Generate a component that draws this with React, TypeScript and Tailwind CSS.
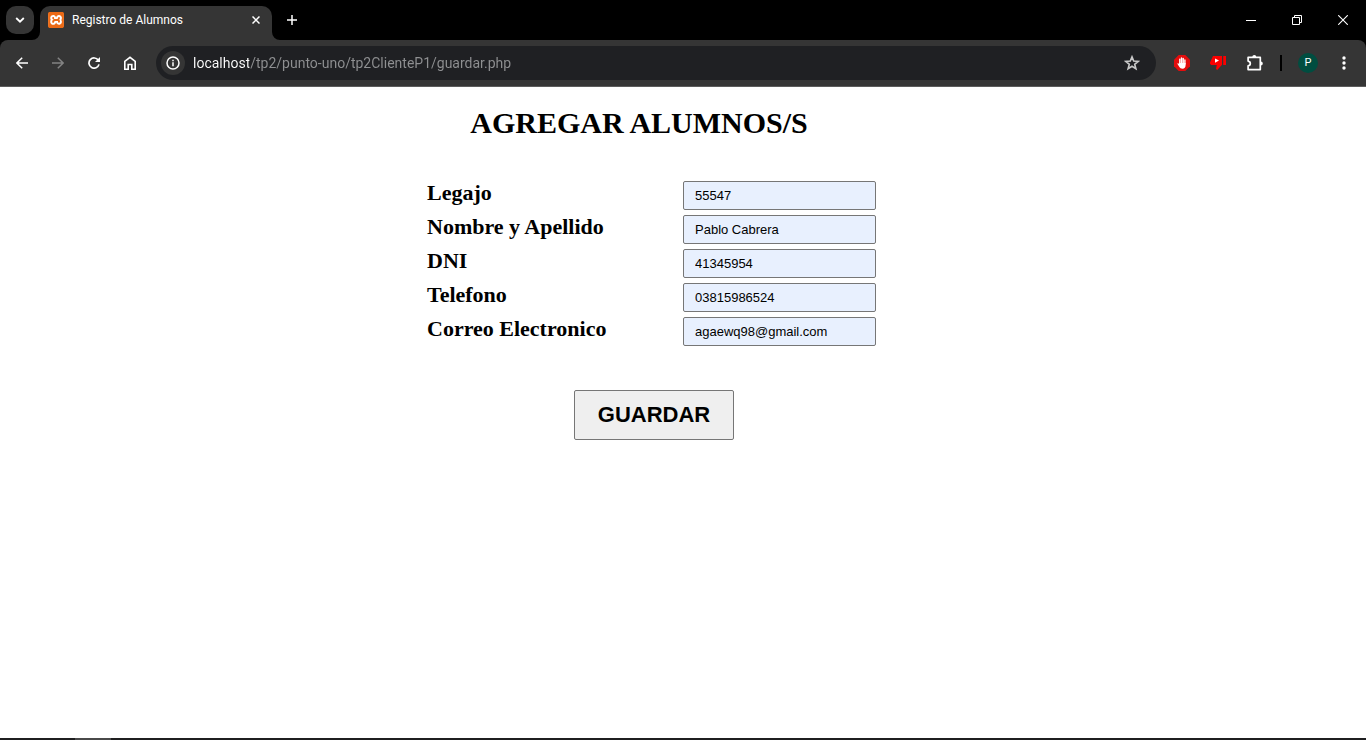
import type { ReactNode } from "react";
import { SiXampp } from "react-icons/si";

const fields = [
  { id: "legajo", label: "Legajo", type: "text", value: "55547" },
  { id: "nombre", label: "Nombre y Apellido", type: "text", value: "Pablo Cabrera" },
  { id: "dni", label: "DNI", type: "text", value: "41345954" },
  { id: "telefono", label: "Telefono", type: "tel", value: "03815986524" },
  { id: "correo", label: "Correo Electronico", type: "email", value: "agaewq98@gmail.com" },
];

function IconButton({ label, className, children }: { label: string; className: string; children: ReactNode }) {
  return (
    <button type="button" aria-label={label} className={"flex shrink-0 items-center justify-center " + className}>
      {children}
    </button>
  );
}

function TabStrip() {
  return (
    <div className="flex h-10 bg-black pl-1.5 text-white">
      <IconButton label="Buscar pestañas" className="mt-1.5 size-7 rounded-[10px] bg-[#353535]">
        <svg width="10" height="6" viewBox="0 0 10 6" fill="none" stroke="currentColor" strokeWidth="1.8">
          <path d="M1.2 1 5 4.7 8.8 1" />
        </svg>
      </IconButton>
      <svg className="mt-auto ml-[-2px] shrink-0 text-[#353535]" width="8" height="8" viewBox="0 0 8 8" fill="currentColor">
        <path d="M8 0v8H0a8 8 0 0 0 8-8z" />
      </svg>
      <div className="mt-1.5 flex h-[34px] w-[232px] items-center rounded-t-[10px] bg-[#353535] pr-2 pb-1.5 pl-2">
        <span className="flex size-4 shrink-0 items-center justify-center rounded-[4px] bg-white">
          <SiXampp className="size-4 text-[#ec6a15]" />
        </span>
        <span className="ml-2 flex-1 truncate font-['Roboto',sans-serif] text-[12px] leading-4">Registro de Alumnos</span>
        <IconButton label="Cerrar pestaña" className="size-4">
          <svg width="8" height="8" viewBox="0 0 8 8" fill="none" stroke="currentColor" strokeWidth="1.5">
            <path d="m.5.5 7 7m0-7-7 7" />
          </svg>
        </IconButton>
      </div>
      <svg className="mt-auto shrink-0 text-[#353535]" width="8" height="8" viewBox="0 0 8 8" fill="currentColor">
        <path d="M0 0v8h8a8 8 0 0 1-8-8z" />
      </svg>
      <IconButton label="Nueva pestaña" className="h-10 w-6">
        <svg width="10" height="10" viewBox="0 0 10 10" fill="none" stroke="currentColor" strokeWidth="1.5">
          <path d="M5 0v10M0 5h10" />
        </svg>
      </IconButton>
      <div className="ml-auto flex">
        <IconButton label="Minimizar" className="h-10 w-[46px]">
          <svg width="10" height="10" viewBox="0 0 10 10" stroke="currentColor">
            <path d="M0 5.5h10" />
          </svg>
        </IconButton>
        <IconButton label="Restaurar" className="h-10 w-[46px]">
          <svg width="10" height="10" viewBox="0 0 10 10" fill="none" stroke="currentColor">
            <path d="M.5 2.5h7v7h-7zM2.5 2.5v-2h7v7h-2" />
          </svg>
        </IconButton>
        <IconButton label="Cerrar" className="h-10 w-[46px]">
          <svg width="10" height="10" viewBox="0 0 10 10" fill="none" stroke="currentColor" strokeWidth="1.1">
            <path d="m.2.2 9.6 9.6m0-9.6L.2 9.8" />
          </svg>
        </IconButton>
      </div>
    </div>
  );
}

function Toolbar() {
  return (
    <div className="bg-black">
      <div className="flex h-[47px] items-center rounded-t-[8px] border-b border-[#5c5c5c] bg-[#353535] pl-1 text-white">
        <IconButton label="Atrás" className="h-8 w-9">
          <svg width="12" height="12" viewBox="0 0 12 12" fill="none" stroke="currentColor" strokeWidth="1.5">
            <path d="M12 6H1.2M6.2.7.9 6l5.3 5.3" />
          </svg>
        </IconButton>
        <IconButton label="Adelante" className="h-8 w-9 text-[#838383]">
          <svg width="12" height="12" viewBox="0 0 12 12" fill="none" stroke="currentColor" strokeWidth="1.5">
            <path d="M0 6h10.8M5.8.7 11.1 6l-5.3 5.3" />
          </svg>
        </IconButton>
        <IconButton label="Recargar" className="h-8 w-9">
          <svg width="12" height="12" viewBox="0 0 12 12" fill="none">
            <path d="M10.3 3.2A5.1 5.1 0 1 0 11 7.4" stroke="currentColor" strokeWidth="1.7" />
            <path d="M12 0v5H7z" fill="currentColor" />
          </svg>
        </IconButton>
        <IconButton label="Inicio" className="h-8 w-9">
          <svg width="14" height="14" viewBox="0 0 14 14" fill="none" stroke="currentColor" strokeWidth="1.6">
            <path d="M1.8 5.3 7 1.3l5.2 4v7.9H8.8V8.5H5.2v4.7H1.8z" />
          </svg>
        </IconButton>
        <div className="ml-2 flex h-[34px] min-w-0 flex-1 items-center rounded-full bg-[#1f2023] pr-2 pl-[5px]">
          <IconButton label="Información del sitio" className="size-6 rounded-full bg-[#353535]">
            <svg width="14" height="14" viewBox="0 0 14 14" fill="none" stroke="currentColor" strokeWidth="1.5">
              <circle cx="7" cy="7" r="6" />
              <path d="M7 6.2v4M7 3.7v1.5" />
            </svg>
          </IconButton>
          <input
            aria-label="Dirección"
            type="text"
            defaultValue="localhost/tp2/punto-uno/tp2ClienteP1/guardar.php"
            className="ml-2 h-6 min-w-0 flex-1 bg-[linear-gradient(to_right,#ffffff_56px,#8f9092_56px)] bg-clip-text font-['Roboto',sans-serif] text-[14px] text-transparent outline-none"
          />
          <IconButton label="Añadir a marcadores" className="size-8">
            <svg width="16" height="16" viewBox="0 0 16 16" fill="none" stroke="#c8c8c8" strokeWidth="1.6">
              <path d="m8 1.900 1.700 4.200 4.500.3-3.500 2.900 1.200 4.400L8 11.300l-3.900 2.400 1.200-4.400-3.500-2.900 4.500-.3z" />
            </svg>
          </IconButton>
        </div>
        <div className="ml-2 flex items-center">
          <IconButton label="AdBlock" className="h-8 w-9">
            <svg width="16" height="16" viewBox="0 0 16 16">
              <path d="M4.700 0h6.600L16 4.700v6.600L11.300 16H4.700L0 11.300V4.700z" fill="#e40d0d" />
              <path d="M5.800 4.300v4M7.500 3v5M9.200 3.500v5M10.900 5v4" stroke="#fff" strokeWidth="1.400" strokeLinecap="round" />
              <path d="M5.100 8h6.500v2.300c0 2-1.200 3.400-3.100 3.400-1.500 0-2.600-.7-3.300-2l-1.700-2.600c-.4-.8.5-1.300 1-.7l.6.700z" fill="#fff" />
            </svg>
          </IconButton>
          <IconButton label="Return YouTube Dislike" className="h-8 w-9">
            <svg width="16" height="16" viewBox="0 0 16 16" fill="#fb0000">
              <path d="M3 1h9v8.700L7.200 15 6 14l.8-4H1.200L0 8.700V7.500z" />
              <path d="M13.200 1H16v9h-2.800z" />
              <path d="M5 3.500v4.200l4-2.100z" fill="#fff" />
            </svg>
          </IconButton>
          <IconButton label="Extensiones" className="h-8 w-9 pl-0.5">
            <svg width="16" height="16" viewBox="0 0 16 16" fill="none">
              <path d="M1.100 2.400h12.200v12.200H1.100v-3.700c1.500-.3 2.200-1.200 2.200-2.400S2.600 6.400 1.100 6.100z" stroke="currentColor" strokeWidth="1.700" strokeLinejoin="round" />
              <path d="M5.300 2.100a2 2 0 0 1 4 0zM13.800 6.500a2 2 0 0 1 0 4z" fill="currentColor" />
            </svg>
          </IconButton>
          <span className="mx-2 h-4 w-0.5 bg-black" />
          <IconButton label="Perfil" className="h-8 w-9">
            <span className="flex size-5 items-center justify-center rounded-full bg-[#004d40] font-['Roboto',sans-serif] text-[11px] leading-5">P</span>
          </IconButton>
          <IconButton label="Menú" className="h-8 w-9">
            <svg width="4" height="14" viewBox="0 0 4 14" fill="currentColor">
              <circle cx="2" cy="2" r="1.7" />
              <circle cx="2" cy="7" r="1.7" />
              <circle cx="2" cy="12" r="1.7" />
            </svg>
          </IconButton>
          <span className="w-1" />
        </div>
      </div>
    </div>
  );
}

function StudentForm() {
  return (
    <form className="mx-auto w-[512px] max-w-full" onSubmit={(e) => e.preventDefault()}>
      <h1 className="pt-4 pr-[88px] text-center text-[30px] leading-10 font-bold">AGREGAR ALUMNOS/S</h1>
      <div className="mt-[38px] flex flex-col gap-[5px]">
        {fields.map((f) => (
          <div key={f.id} className="grid h-[29px] grid-cols-2">
            <label htmlFor={f.id} className="text-[22px] leading-6 font-bold">
              {f.label}
            </label>
            <input
              id={f.id}
              type={f.type}
              defaultValue={f.value}
              className="h-[29px] w-[193px] rounded-[2px] border border-[#767676] bg-[#e8f0fe] px-[11px] font-['Liberation_Sans',sans-serif] text-[13px]"
            />
          </div>
        ))}
      </div>
      <div className="mt-11 flex justify-center pr-[58px]">
        <button
          type="submit"
          className="h-[50px] w-40 rounded-[2px] border border-[#767676] bg-[#efefef] pb-0.5 font-['Liberation_Sans',sans-serif] text-[22px] font-bold"
        >
          GUARDAR
        </button>
      </div>
    </form>
  );
}

export default function App() {
  return (
    <div className="flex min-h-screen flex-col bg-white">
      <header>
        <TabStrip />
        <Toolbar />
      </header>
      <main className="flex-1 font-['Liberation_Serif',serif] text-black">
        <StudentForm />
      </main>
      <footer className="flex h-0.5 bg-[#1f1f20] pl-[75px]">
        <span className="w-9 bg-[#4a4a4a]" />
      </footer>
    </div>
  );
}
